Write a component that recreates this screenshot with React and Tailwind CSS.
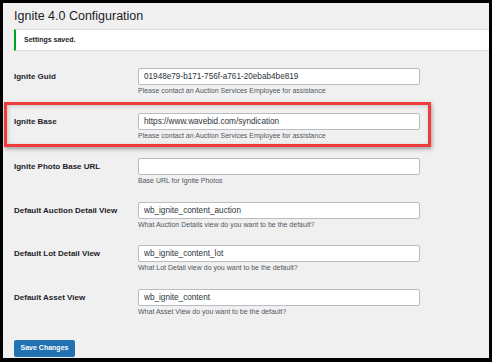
import React from 'react'

const fields = [
  { label: 'Ignite Guid', value: '01948e79-b171-756f-a761-20ebab4be819', help: 'Please contact an Auction Services Employee for assistance', h: 'h-[45px]' },
  { label: 'Ignite Base', value: 'https://www.wavebid.com/syndication', help: 'Please contact an Auction Services Employee for assistance', h: 'h-[45px]', marked: true },
  { label: 'Ignite Photo Base URL', value: '', help: 'Base URL for Ignite Photos', h: 'h-[44px]' },
  { label: 'Default Auction Detail View', value: 'wb_ignite_content_auction', help: 'What Auction Details view do you want to be the default?', h: 'h-[43px]' },
  { label: 'Default Lot Detail View', value: 'wb_ignite_content_lot', help: 'What Lot Detail view do you want to be the default?', h: 'h-[44px]' },
  { label: 'Default Asset View', value: 'wb_ignite_content', help: 'What Asset View do you want to be the default?', h: 'h-[44px]' },
]

const FieldRow = ({ label, value, help, marked, h }) => (
  <div className={`relative flex items-start ${h}`}>
    <div className="flex h-[17px] w-[124px] items-center text-[8px] font-bold text-[#1d2327]">{label}</div>
    <div className="w-[282px]">
      <input
        readOnly
        defaultValue={value}
        className="block h-[17px] w-full rounded-[2px] border border-[#b9bcc0] bg-white px-[5px] text-[8.2px] text-[#2c3338] outline-none"
      />
      <p className="mt-[1px] text-[7px] leading-[10px] text-[#50575e]">{help}</p>
    </div>

    {/* annotation box */}
    {marked && (
      <div className="pointer-events-none absolute top-[-11px] left-[-10px] h-[45px] w-[427px] border-[3px] border-[#ee3b3b] shadow-[1px_2px_4px_rgba(0,0,0,0.35),inset_1px_1px_4px_rgba(0,0,0,0.18)]" />
    )}
  </div>
)

export default function App() {
  return (
    <div className="h-[362px] w-[492px] overflow-hidden bg-black pt-[3px] pr-[3px] pb-[4px] pl-[3px] font-['Liberation_Sans',Arial,sans-serif]">
      <div className="h-full w-full bg-[#f0f0f1] pl-[11px]">
        <h1 className="pt-[5px] text-[12.5px] leading-[16px] text-[#1d2327]">Ignite 4.0 Configuration</h1>

        {/* Notice */}
        <div className="mt-[5px] flex h-[22px] items-center border-y border-[#dcdcde] border-l-[2.5px] border-l-[#00a32a] bg-white pl-[8px]">
          <span className="text-[7px] font-bold text-[#1d2327]">Settings saved.</span>
        </div>

        <div className="mt-[17px] flex flex-col">
          {fields.map((f) => (
            <FieldRow key={f.label} {...f} />
          ))}
        </div>

        <button className="mt-[3px] h-[17px] w-[61px] rounded-[2px] bg-[#2271b1] text-[7px] font-bold text-white">
          Save Changes
        </button>
      </div>
    </div>
  )
}
